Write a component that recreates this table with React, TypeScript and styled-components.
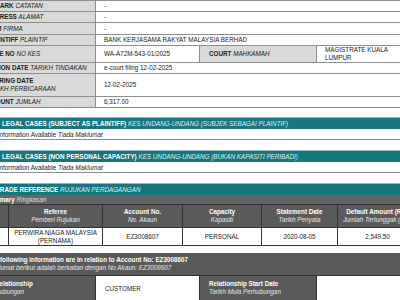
import styled, { createGlobalStyle } from "styled-components";

const GlobalStyle = createGlobalStyle`
  html, body {
    margin: 0;
    padding: 0;
    background: #ffffff;
    overflow: hidden;
  }
  body {
    font-family: "Liberation Sans", Arial, sans-serif;
    font-size: 6.3px;
    color: #222222;
  }
`;

const colors = {
  label: "#d9d9d9",
  line: "#8e8e8e",
  teal: "#17767f",
  dark: "#5a5a5a",
  darkLine: "#333333",
};

const Page = styled.div({
  width: 440,
  marginLeft: -18,
  display: "flex",
  flexDirection: "column",
});

const DetailGrid = styled.div({
  display: "grid",
  gridTemplateColumns: "114px 104px 117px 1fr",
  borderTop: `1px solid ${colors.line}`,
});

const LabelCell = styled.div<{ $h?: number; $pad?: number }>((p) => ({
  height: p.$h ?? 10,
  display: "flex",
  flexDirection: "column",
  justifyContent: "center",
  padding: `0 ${p.$pad ?? 4}px`,
  background: colors.label,
  borderBottom: `1px solid ${colors.line}`,
  borderRight: `1px solid ${colors.line}`,
  fontWeight: "bold",
  lineHeight: "8px",
  whiteSpace: "nowrap",
}));

const ValueCell = styled.div<{ $h?: number; $span?: number; $boxed?: boolean }>((p) => ({
  height: p.$h ?? 10,
  gridColumn: p.$span ? `span ${p.$span}` : undefined,
  display: "flex",
  flexDirection: "column",
  justifyContent: "center",
  padding: "0 8px",
  background: "#ffffff",
  borderBottom: `1px solid ${colors.line}`,
  borderRight: p.$boxed ? `1px solid ${colors.line}` : undefined,
  lineHeight: "8px",
  whiteSpace: "nowrap",
}));

const Ital = styled.i({
  fontWeight: "normal",
});

const SectionHeader = styled.div<{ $indent: number; $top?: number }>((p) => ({
  marginTop: p.$top ?? 0,
  height: 11,
  display: "flex",
  alignItems: "center",
  paddingLeft: p.$indent,
  background: colors.teal,
  borderTop: "1px solid #8fb9be",
  color: "#ffffff",
  fontWeight: "bold",
  whiteSpace: "nowrap",
  "& i": { color: "#d6f1f4" },
}));

const InfoRow = styled.div({
  height: 10,
  display: "flex",
  alignItems: "center",
  paddingLeft: 6,
  borderBottom: `1px solid ${colors.line}`,
  whiteSpace: "nowrap",
});

const SummaryBar = styled.div({
  height: 9,
  display: "flex",
  alignItems: "center",
  paddingLeft: 4,
  background: "#656565",
  color: "#ffffff",
  fontWeight: "bold",
  whiteSpace: "nowrap",
  "& i": { color: "#dddddd" },
});

const TradeTable = styled.div({
  display: "grid",
  gridTemplateColumns: "27px 94px 80px 79px 76px 80px",
  borderBottom: `1px solid ${colors.darkLine}`,
});

const HeadCell = styled.div({
  height: 22,
  display: "flex",
  flexDirection: "column",
  justifyContent: "center",
  alignItems: "center",
  background: colors.dark,
  color: "#ffffff",
  fontWeight: "bold",
  lineHeight: "8px",
  borderRight: `1px solid ${colors.darkLine}`,
  borderTop: `1px solid ${colors.darkLine}`,
  whiteSpace: "nowrap",
  "& i": { color: "#e6e6e6" },
});

const DataCell = styled.div({
  height: 17,
  display: "flex",
  alignItems: "center",
  justifyContent: "center",
  textAlign: "center",
  lineHeight: "8px",
  borderRight: `1px solid ${colors.darkLine}`,
  borderTop: `1px solid ${colors.darkLine}`,
  whiteSpace: "nowrap",
});

const NoteHeader = styled.div({
  marginTop: 7,
  height: 22,
  display: "flex",
  flexDirection: "column",
  justifyContent: "center",
  paddingLeft: 5,
  background: colors.dark,
  color: "#ffffff",
  fontWeight: "bold",
  lineHeight: "8px",
  whiteSpace: "nowrap",
  "& i": { color: "#e6e6e6" },
});

const RelationGrid = styled.div({
  display: "grid",
  gridTemplateColumns: "114px 104px 117px 1fr",
  borderTop: `1px solid ${colors.darkLine}`,
});

const RelLabel = styled.div<{ $pad: number }>((p) => ({
  height: 24,
  display: "flex",
  flexDirection: "column",
  justifyContent: "center",
  paddingLeft: p.$pad,
  background: colors.dark,
  color: "#ffffff",
  fontWeight: "bold",
  lineHeight: "8px",
  borderRight: `1px solid ${colors.darkLine}`,
  whiteSpace: "nowrap",
  "& i": { color: "#e6e6e6" },
}));

const RelValue = styled.div({
  height: 24,
  display: "flex",
  alignItems: "center",
  paddingLeft: 9,
  background: "#ffffff",
  borderRight: `1px solid ${colors.darkLine}`,
  whiteSpace: "nowrap",
});

const tradeHeads = [
  ["No.", "Bil."],
  ["Referee", "Pemberi Rujukan"],
  ["Account No.", "No. Akaun"],
  ["Capacity", "Kapasiti"],
  ["Statement Date", "Tarikh Penyata"],
  ["Default Amount (RM)", "Jumlah Tertunggak (RM)"],
];

export default function App() {
  return (
    <>
      <GlobalStyle />
      <Page>
        <DetailGrid>
          <LabelCell>
            <span>REMARK <Ital>CATATAN</Ital></span>
          </LabelCell>
          <ValueCell $span={3}>-</ValueCell>
          <LabelCell>
            <span>ADDRESS <Ital>ALAMAT</Ital></span>
          </LabelCell>
          <ValueCell $span={3}>-</ValueCell>
          <LabelCell $h={11}>
            <span>FIRM <Ital>FIRMA</Ital></span>
          </LabelCell>
          <ValueCell $span={3} $h={11}>-</ValueCell>
          <LabelCell>
            <span>PLAINTIFF <Ital>PLAINTIF</Ital></span>
          </LabelCell>
          <ValueCell $span={3}>BANK KERJASAMA RAKYAT MALAYSIA BERHAD</ValueCell>
          <LabelCell $h={16}>
            <span>CASE NO <Ital>NO KES</Ital></span>
          </LabelCell>
          <ValueCell $h={16} $boxed>WA-A72M-543-01/2025</ValueCell>
          <LabelCell $h={16} $pad={9}>
            <span>COURT <Ital>MAHKAMAH</Ital></span>
          </LabelCell>
          <ValueCell $h={16}>
            <span>MAGISTRATE KUALA</span>
            <span>LUMPUR</span>
          </ValueCell>
          <LabelCell>
            <span>ACTION DATE <Ital>TARIKH TINDAKAN</Ital></span>
          </LabelCell>
          <ValueCell $span={3}>e-court filing 12-02-2025</ValueCell>
          <LabelCell $h={22}>
            <span>HEARING DATE</span>
            <Ital>TARIKH PERBICARAAN</Ital>
          </LabelCell>
          <ValueCell $span={3} $h={22}>12-02-2025</ValueCell>
          <LabelCell>
            <span>AMOUNT <Ital>JUMLAH</Ital></span>
          </LabelCell>
          <ValueCell $span={3}>6,317.00</ValueCell>
        </DetailGrid>

        <SectionHeader $indent={20} $top={9}>
          LEGAL CASES (SUBJECT AS PLAINTIFF)&nbsp;
          <Ital>KES UNDANG-UNDANG (SUBJEK SEBAGAI PLAINTIF)</Ital>
        </SectionHeader>
        <InfoRow>
          No Information Available&nbsp;<Ital>Tiada Maklumat</Ital>
        </InfoRow>

        <SectionHeader $indent={20} $top={10}>
          LEGAL CASES (NON PERSONAL CAPACITY)&nbsp;
          <Ital>KES UNDANG-UNDANG (BUKAN KAPASITI PERIBADI)</Ital>
        </SectionHeader>
        <InfoRow>
          No Information Available&nbsp;<Ital>Tiada Maklumat</Ital>
        </InfoRow>

        <SectionHeader $indent={14} $top={10}>
          TRADE REFERENCE&nbsp;<Ital>RUJUKAN PERDAGANGAN</Ital>
        </SectionHeader>
        <SummaryBar>
          Summary&nbsp;<Ital>Ringkasan</Ital>
        </SummaryBar>
        <TradeTable>
          {tradeHeads.map(([en, ms]) => (
            <HeadCell key={en}>
              <span>{en}</span>
              <Ital>{ms}</Ital>
            </HeadCell>
          ))}
          <DataCell>1</DataCell>
          <DataCell>
            PERWIRA NIAGA MALAYSIA
            <br />
            (PERNAMA)
          </DataCell>
          <DataCell>EZ3008607</DataCell>
          <DataCell>PERSONAL</DataCell>
          <DataCell>2020-08-05</DataCell>
          <DataCell>2,549.50</DataCell>
        </TradeTable>

        <NoteHeader>
          <span>The following information are in relation to Account No: EZ3008607</span>
          <Ital>Maklumat berikut adalah berkaitan dengan No Akaun: EZ3008607</Ital>
        </NoteHeader>
        <RelationGrid>
          <RelLabel $pad={13}>
            <span>Relationship</span>
            <Ital>Hubungan</Ital>
          </RelLabel>
          <RelValue>CUSTOMER</RelValue>
          <RelLabel $pad={9}>
            <span>Relationship Start Date</span>
            <Ital>Tarikh Mula Perhubungan</Ital>
          </RelLabel>
          <RelValue />
        </RelationGrid>
      </Page>
    </>
  );
}
